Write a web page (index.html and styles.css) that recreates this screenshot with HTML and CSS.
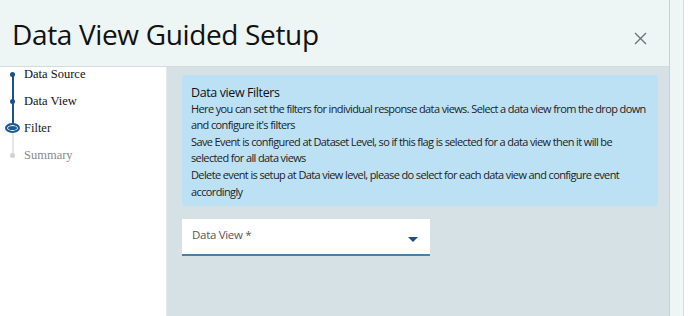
FILE: index.html
```html
<!DOCTYPE html>
<html lang="en">
<head>
    <meta charset="UTF-8">
    <title>Data View Guided Setup</title>
    <link rel="stylesheet" href="styles.css">
</head>
<body>

    <div class="page">
        <div class="modal">
            <!-- Header -->
            <div class="modal-header">
                <h1>Data View Guided Setup</h1>
                <svg class="close" width="13" height="13" viewBox="0 0 13 13">
                    <path d="M1 1 L12 12 M12 1 L1 12" stroke="#6c7475" stroke-width="1.4" fill="none"/>
                </svg>
            </div>

            <div class="modal-body">
                <!-- Steps -->
                <ul class="steps">
                    <li class="step done">Data Source</li>
                    <li class="step done">Data View</li>
                    <li class="step current">Filter</li>
                    <li class="step todo">Summary</li>
                </ul>

                <!-- Main content -->
                <div class="content">
                    <div class="info">
                        <h2>Data view Filters</h2>
                        <p>Here you can set the filters for individual response data views. Select a data view from the drop down<br>and configure it's filters</p>
                        <p>Save Event is configured at Dataset Level, so if this flag is selected for a data view then it will be<br>selected for all data views</p>
                        <p>Delete event is setup at Data view level, please do select for each data view and configure event<br>accordingly</p>
                    </div>

                    <div class="select">
                        <span class="select-label">Data View *</span>
                        <span class="caret"></span>
                    </div>
                </div>
            </div>
        </div>
        <div class="scroll-strip"></div>
    </div>

</body>
</html>
```

FILE: styles.css
```css
body {
    margin: 0;
    font-family: "Open Sans", sans-serif;
    background-color: #fff;
    color: #222;
    overflow: hidden;
}

.page {
    display: flex;
    height: 316px;
}

.modal {
    width: 669px;
    border-right: 1px solid #c9d0d0;
    display: flex;
    flex-direction: column;
}

.scroll-strip {
    width: 13px;
    background-color: #eef6f5;
    border-right: 1px solid #d8dede;
}

.modal-header {
    height: 66px;
    background-color: #eef5f5;
    border-bottom: 1px solid #d2dcdc;
    display: flex;
    align-items: center;
    justify-content: space-between;
    padding: 0 22px 0 12px;
    flex-shrink: 0;
}

.modal-header h1 {
    margin: 0;
    font-size: 28px;
    font-weight: 400;
    color: #111;
    letter-spacing: -0.35px;
    position: relative;
    top: 1px;
}

.close {
    margin-top: 10px;
}

.modal-body {
    flex: 1;
    display: flex;
}

.steps {
    list-style: none;
    margin: 0;
    padding: 0;
    width: 166px;
    background-color: #fff;
    border-right: 1px solid #e3e7e8;
    font-family: "Liberation Serif", serif;
    font-size: 12.5px;
}

.step {
    position: relative;
    height: 27px;
    padding-left: 24px;
    line-height: 16px;
    color: #111;
}

.step:first-child {
    margin-top: -1px;
}

.step::before {
    content: '';
    position: absolute;
    left: 10px;
    top: 6px;
    width: 5px;
    height: 5px;
    border-radius: 50%;
    background-color: #1d4f80;
}

.step::after {
    content: '';
    position: absolute;
    left: 12px;
    top: 9px;
    width: 2px;
    height: 27px;
    background-color: #1d4f80;
}

.step.current {
    color: #222;
}

.step.current::before {
    left: 5px;
    top: 3px;
    width: 11px;
    height: 6px;
    border: 2px solid #1d5a92;
    background-color: #1d5a92;
    box-shadow: inset 0 0 0 1px #fff;
}

.step.current::after {
    background-color: #e4e6e7;
    top: 13px;
    height: 23px;
}

.step.todo {
    color: #8a8a8a;
}

.step.todo::before {
    background-color: #d0d2d3;
}

.step.todo::after {
    display: none;
}

.content {
    flex: 1;
    background-color: #d6e1e6;
    padding: 8px 11px 0 15px;
}

.info {
    background-color: #bce1f5;
    border-radius: 4px;
    padding: 10px 4px 6px 9px;
    font-size: 11px;
    line-height: 16.6px;
    letter-spacing: -0.62px;
    color: #222;
}

.info h2 {
    margin: 0 0 -1px;
    font-size: 12.5px;
    font-weight: 400;
    letter-spacing: -0.4px;
    color: #111;
}

.info p {
    margin: 0;
}

.select {
    margin-top: 13px;
    width: 248px;
    height: 35px;
    background-color: #fff;
    border-bottom: 2px solid #4b80a9;
    position: relative;
}

.select-label {
    position: absolute;
    left: 10px;
    top: 8px;
    font-size: 11.5px;
    color: #555;
    letter-spacing: -0.3px;
}

.caret {
    position: absolute;
    right: 12px;
    top: 18px;
    border-left: 5px solid transparent;
    border-right: 5px solid transparent;
    border-top: 5px solid #1d4f80;
}
```
